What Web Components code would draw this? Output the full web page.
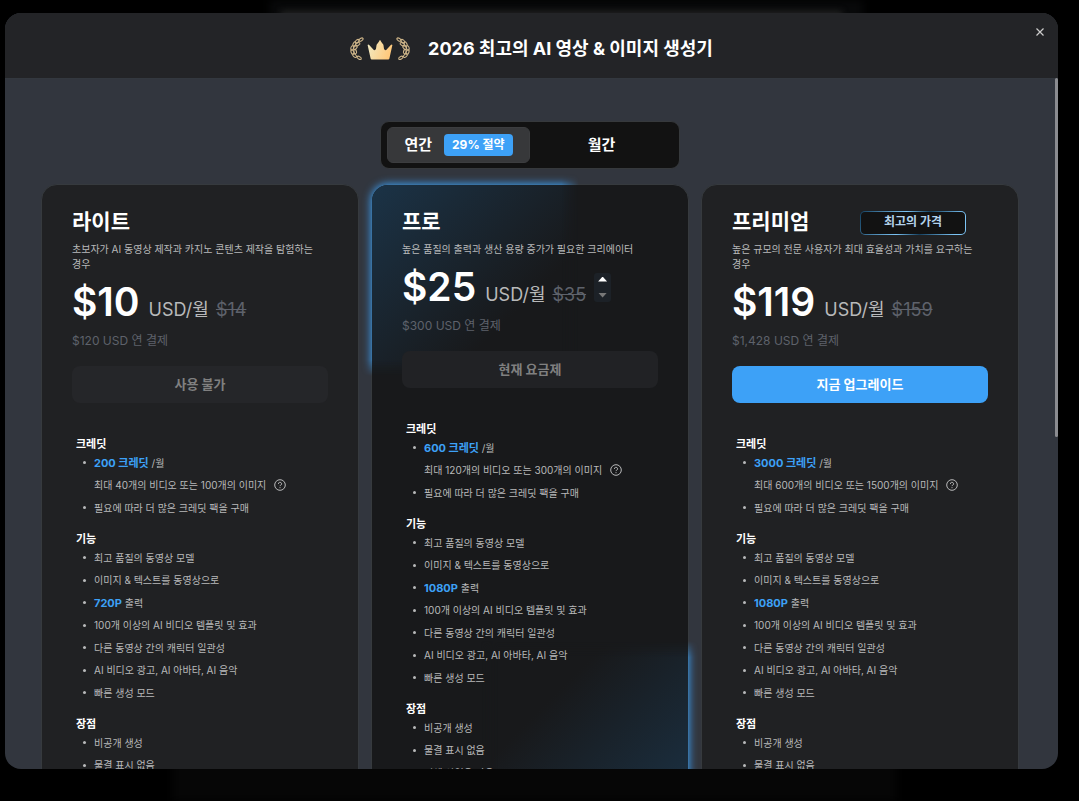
<!DOCTYPE html>
<html lang="ko">
<head>
<meta charset="utf-8">
<meta name="viewport" content="width=device-width, initial-scale=1">
<title>2026 최고의 AI 영상 &amp; 이미지 생성기</title>
<style>
  html { background: #000; }
  body { margin: 0; font-family: Inter, "Noto Sans CJK KR", sans-serif; color: #fff; }
</style>
</head>
<body>
<pricing-page></pricing-page>

<script>
const define = (name, html, setup) => {
  const tpl = document.createElement('template');
  tpl.innerHTML = html;
  customElements.define(name, class extends HTMLElement {
    constructor() {
      super();
      this.attachShadow({ mode: 'open' }).appendChild(tpl.content.cloneNode(true));
    }
    connectedCallback() { if (setup) setup(this, this.shadowRoot); }
  });
};

/* Laurel wreath with a crown */
const leaf = (x, y, r) => `<ellipse cx="${x}" cy="${y}" rx="2.3" ry="1.3" transform="rotate(${r} ${x} ${y})"/>`;
const branch = [[11,1.6,-32],[7.2,3.2,-38],[4.4,6,-62],[7.8,6.2,-30],[2.2,10,-80],[5.4,9.6,-48],[2.4,14,70],[5.2,13.6,75],[4.6,17.6,42],[9.2,19.8,28]]
  .map(a => leaf(...a)).join('');
define('crown-emblem', `
<style>:host { display: block; width: 60px; height: 24px; } svg { display: block; width: 60px; height: 24px; }</style>
<svg viewBox="0 0 60 24" aria-hidden="true">
  <defs><linearGradient id="g" x1="0" y1="0" x2="1" y2=".3">
    <stop offset="0" stop-color="#f0ecc8"/><stop offset="1" stop-color="#ffc97c"/></linearGradient></defs>
  <g fill="none" stroke="#cdb488" stroke-width="1.1"><g transform="translate(0 1)">${branch}</g><g transform="translate(60 1) scale(-1 1)">${branch}</g></g>
  <path fill="url(#g)" d="M17.600 8q.6-.8 1.600 0l4.600 5q1.600.6 2.200-1.200l.6-4Q28.800 5.200 30 2.800q1.200 2.400 3.400 5l.6 4q.6 1.800 2.200 1.200l4.600-5q1-.8 1.600 0l-3 13.600q-.2.900-1.200.9H21.800q-1 0-1.200-.9z"/>
</svg>`);

define('modal-header', `
<style>
  :host { display: flex; align-items: center; justify-content: center; position: relative; height: 65px; background: #232427; flex: none; }
  h1 { margin: 0 0 0 18px; font-size: 18px; line-height: 24px; font-weight: 700; }
  .brand { display: flex; align-items: center; padding-top: 6px; }
  button { position: absolute; top: 12px; right: 11px; width: 14px; height: 14px; padding: 3px; border: 0; background: none; color: #ccc; }
  svg { display: block; width: 8px; height: 8px; }
</style>
<div class="brand"><crown-emblem></crown-emblem><h1><slot></slot></h1></div>
<button type="button" aria-label="닫기"><svg viewBox="0 0 8 8" stroke="currentColor" stroke-width="1.2"><path d="M.5.5l7 7M7.500.5l-7 7"/></svg></button>`);

define('billing-toggle', `
<style>
  :host { display: flex; box-sizing: border-box; width: 300px; height: 48px; padding: 5px 6px; background: #121212; border: 1px solid #36393c; border-radius: 9px; }
  button { flex: 1; display: flex; align-items: center; justify-content: center; gap: 12px; padding: 0; border: 1px solid transparent; border-radius: 6px; background: none; color: #fff; font: 700 15px/20px Inter, "Noto Sans CJK KR", sans-serif; }
  button[aria-pressed=true] { background: #37383a; border-color: #3c3d3f; }
  .save { background: #3da1f7; border-radius: 4px; padding: 0 8px; height: 22px; font-size: 12px; line-height: 21px; }
</style>
<button type="button" aria-pressed="true">연간 <span class="save">29% 절약</span></button>
<button type="button" aria-pressed="false">월간</button>`);

define('price-stepper', `
<style>
  :host { display: flex; flex-direction: column; justify-content: space-between; box-sizing: border-box; width: 17px; height: 29px; padding: 4px 4px; background: #1c2127; border-radius: 3px; }
  button { display: block; width: 9px; height: 5px; padding: 0; border: 0; background: #fff; clip-path: polygon(50% 0, 100% 100%, 0 100%); }
  button + button { background: #777; clip-path: polygon(0 0, 100% 0, 50% 100%); }
</style>
<button type="button" aria-label="크레딧 늘리기"></button><button type="button" aria-label="크레딧 줄이기"></button>`);

define('plan-price', `
<style>
  :host { display: block; }
  .row { display: flex; align-items: baseline; height: 60px; line-height: 60px; white-space: nowrap; }
  .now { font-size: 39px; font-weight: 600; }
  .unit { font-size: 18px; margin-left: 9px; color: #b8b9ba; }
  del { font-size: 18px; margin-left: 7px; color: #5e626b; }
  ::slotted(price-stepper) { align-self: center; margin-left: 8px; }
  p { margin: 1px 0 0; font-size: 12px; line-height: 16px; color: #5e626b; }
</style>
<div class="row"><span class="now"></span><span class="unit">USD/월</span><del></del><slot></slot></div><p></p>`,
(el, root) => {
  root.querySelector('.now').textContent = el.getAttribute('now');
  root.querySelector('del').textContent = el.getAttribute('was');
  root.querySelector('p').textContent = el.getAttribute('yearly');
});

define('plan-card', `
<style>
  :host { display: block; position: relative; box-sizing: border-box; padding: 21px 30px 36px; background: #202123; border: 1px solid #363a3e; border-radius: 16px; }
  :host([featured]) { background: #18191b; }
  .glow { display: none; position: absolute; width: 220px; height: 204px; overflow: hidden; pointer-events: none; }
  :host([featured]) .glow { display: block; }
  .glow.start { left: -13px; top: -13px; mask: linear-gradient(90deg, #000 92%, transparent), linear-gradient(#000 92%, transparent); mask-composite: intersect; }
  .glow.end { right: -13px; bottom: -13px; mask: linear-gradient(270deg, #000 92%, transparent), linear-gradient(0deg, #000 92%, transparent); mask-composite: intersect; }
  .glow i { position: absolute; width: 300px; height: 300px; border-radius: 16px; box-shadow: 0 0 8px 1px #3da1f7; }
  .start i { left: 13px; top: 13px; background: linear-gradient(135deg, #1b3347, #18191b 45%); }
  .end i { right: 13px; bottom: 13px; background: linear-gradient(315deg, #1b3347, #18191b 45%); }
  .content { position: relative; }
  .title { display: flex; align-items: center; justify-content: space-between; padding-right: 22px; height: 31px; }
  h2 { margin: 0; font-size: 21px; line-height: 31px; font-weight: 700; }
  ::slotted(best-badge) { margin-top: 2px; }
  .desc { margin: 5px 0 0; font-size: 10px; line-height: 15px; color: #b8b9ba; word-break: keep-all; }
  button { display: block; width: 100%; height: 37px; margin: 17px 0 33px; padding: 0 0 2px; border: 0; border-radius: 8px; background: #3da1f7; color: #fff; font: 700 13px/20px Inter, "Noto Sans CJK KR", sans-serif; }
  button:disabled { background: #252629; color: #808080; }
  :host([featured]) button { background: #212225; }
</style>
<div class="glow start"><i></i></div><div class="glow end"><i></i></div>
<div class="content">
  <div class="title"><h2></h2><slot name="badge"></slot></div>
  <p class="desc"></p>
  <slot name="price"></slot>
  <button type="button"></button>
  <slot></slot>
</div>`,
(el, root) => {
  root.querySelector('h2').textContent = el.getAttribute('name');
  root.querySelector('.desc').textContent = el.getAttribute('desc');
  const b = root.querySelector('button');
  b.textContent = el.getAttribute('action');
  b.disabled = el.hasAttribute('unavailable');
});

define('best-badge', `
<style>
  :host { display: block; box-sizing: border-box; width: 106px; height: 24px; padding: 1px; border-radius: 5px; background: linear-gradient(115deg, #14405f, #7cc4f5 40%, #14405f 60%, #7cc4f5 90%); }
  span { display: block; height: 22px; border-radius: 4px; background: #121212; text-align: center; font-size: 12px; line-height: 20px; font-weight: 700; color: #b3d3ec; }
</style><span><slot></slot></span>`);

define('feature-group', `
<style>
  :host { display: block; margin: 0 0 15px 4px; font-size: 10px; line-height: 1.65; color: #b8b9ba; }
  h3 { margin: 0 0 2px; font-size: 11px; line-height: 1.5; font-weight: 700; color: #fff; }
  .items { display: flex; flex-direction: column; gap: 6px; }
</style><h3></h3><div class="items" role="list"><slot></slot></div>`,
(el, root) => { root.querySelector('h3').textContent = el.getAttribute('heading'); });

define('feature-item', `
<style>
  :host { display: flex; align-items: center; padding-left: 18px; position: relative; white-space: nowrap; }
  :host(:not([plain]))::before { content: ""; position: absolute; left: 7px; width: 3px; height: 3px; border-radius: 2px; background: #b8b9ba; }
  ::slotted(b) { color: #3da1f7; font-size: 11px; line-height: 1.5; font-weight: 700; }
</style><span><slot></slot></span><slot name="help"></slot>`,
el => el.setAttribute('role', 'listitem'));

define('help-icon', `
<style>:host { display: block; width: 12px; height: 12px; margin-left: 8px; color: #b8b9ba; } svg { display: block; width: 12px; height: 12px; }</style>
<svg viewBox="0 0 12 12" fill="none" stroke="currentColor" aria-hidden="true"><circle cx="6" cy="6" r="5.3"/><path d="M4.400 4.900a1.600 1.500 0 1 1 2.400 1.200c-.6.3-.8.5-.8 1"/><path d="M6 8.200v1"/></svg>`);

const perks = ['비공개 생성', '물결 표시 없음'];
const plans = [
  { name: '라이트', desc: '초보자가 AI 동영상 제작과 카지노 콘텐츠 제작을 탐험하는 경우', now: '$10', was: '$14', yearly: '$120 USD 연 결제', action: '사용 불가', off: true, credits: 200, max: '최대 40개의 비디오 또는 100개의 이미지', res: '720P', perks },
  { name: '프로', desc: '높은 품질의 출력과 생산 용량 증가가 필요한 크리에이터', now: '$25', was: '$35', yearly: '$300 USD 연 결제', action: '현재 요금제', off: true, featured: true, credits: 600, max: '최대 120개의 비디오 또는 300개의 이미지', res: '1080P', perks: [...perks, '전체 상업용 사용'] },
  { name: '프리미엄', desc: '높은 규모의 전문 사용자가 최대 효율성과 가치를 요구하는 경우', now: '$119', was: '$159', yearly: '$1,428 USD 연 결제', action: '지금 업그레이드', badge: '최고의 가격', credits: 3000, max: '최대 600개의 비디오 또는 1500개의 이미지', res: '1080P', perks }
];
const item = t => `<feature-item>${t}</feature-item>`;
const card = p => `
<plan-card name="${p.name}" desc="${p.desc}" action="${p.action}" ${p.off ? 'unavailable' : ''} ${p.featured ? 'featured' : ''}>
  ${p.badge ? `<best-badge slot="badge">${p.badge}</best-badge>` : ''}
  <plan-price slot="price" now="${p.now}" was="${p.was}" yearly="${p.yearly}">${p.featured ? '<price-stepper></price-stepper>' : ''}</plan-price>
  <feature-group heading="크레딧">
    ${item(`<b>${p.credits} 크레딧</b> /월`)}
    <feature-item plain>${p.max}<help-icon slot="help"></help-icon></feature-item>
    ${item('필요에 따라 더 많은 크레딧 팩을 구매')}
  </feature-group>
  <feature-group heading="기능">
    ${['최고 품질의 동영상 모델', '이미지 &amp; 텍스트를 동영상으로', `<b>${p.res}</b> 출력`, '100개 이상의 AI 비디오 템플릿 및 효과', '다른 동영상 간의 캐릭터 일관성', 'AI 비디오 광고, AI 아바타, AI 음악', '빠른 생성 모드'].map(item).join('')}
  </feature-group>
  <feature-group heading="장점">
    ${p.perks.map(item).join('')}
  </feature-group>
</plan-card>`;

define('pricing-page', `
<style>
  :host { display: flex; box-sizing: border-box; height: 100vh; padding: 13px 21px 32px 5px; position: relative; overflow: hidden; background: #000; }
  .haze { position: absolute; background: #08090a; filter: blur(4px); }
  .haze.top { left: 25%; right: 20%; top: 0; height: 30px; }
  .haze.bottom { left: 16%; right: 17%; bottom: 0; height: 60px; background: #060606; }
  .haze.words { left: 26%; right: 22%; top: 11px; height: 10px; background: #222; filter: blur(3px); }
  .modal { position: relative; flex: 1; min-width: 0; display: flex; flex-direction: column; border-radius: 16px; overflow: hidden; background: #32363e; }
  .body { flex: 1; min-height: 0; display: grid; grid-template-columns: minmax(0, 1fr) 3px; }
  .scroll { overflow-y: auto; scrollbar-width: none; padding: 42px 36px 36px; display: flex; flex-direction: column; align-items: center; gap: 15px; border-top: 1px solid #33383f; box-sizing: border-box; }
  .bar { height: 52%; background: #8b8c90; border-radius: 2px; }
  .plans { width: 100%; display: grid; grid-template-columns: repeat(3, minmax(0, 1fr)); gap: 12px; flex: none; }
  billing-toggle { flex: none; }
</style>
<div class="haze top"></div><div class="haze words"></div><div class="haze bottom"></div>
<div class="modal" role="dialog" aria-modal="true">
  <modal-header>2026 최고의 AI 영상 &amp; 이미지 생성기</modal-header>
  <div class="body">
    <div class="scroll">
      <billing-toggle></billing-toggle>
      <div class="plans">${plans.map(card).join('')}</div>
    </div>
    <div class="bar"></div>
  </div>
</div>`);
</script>
</body>
</html>
